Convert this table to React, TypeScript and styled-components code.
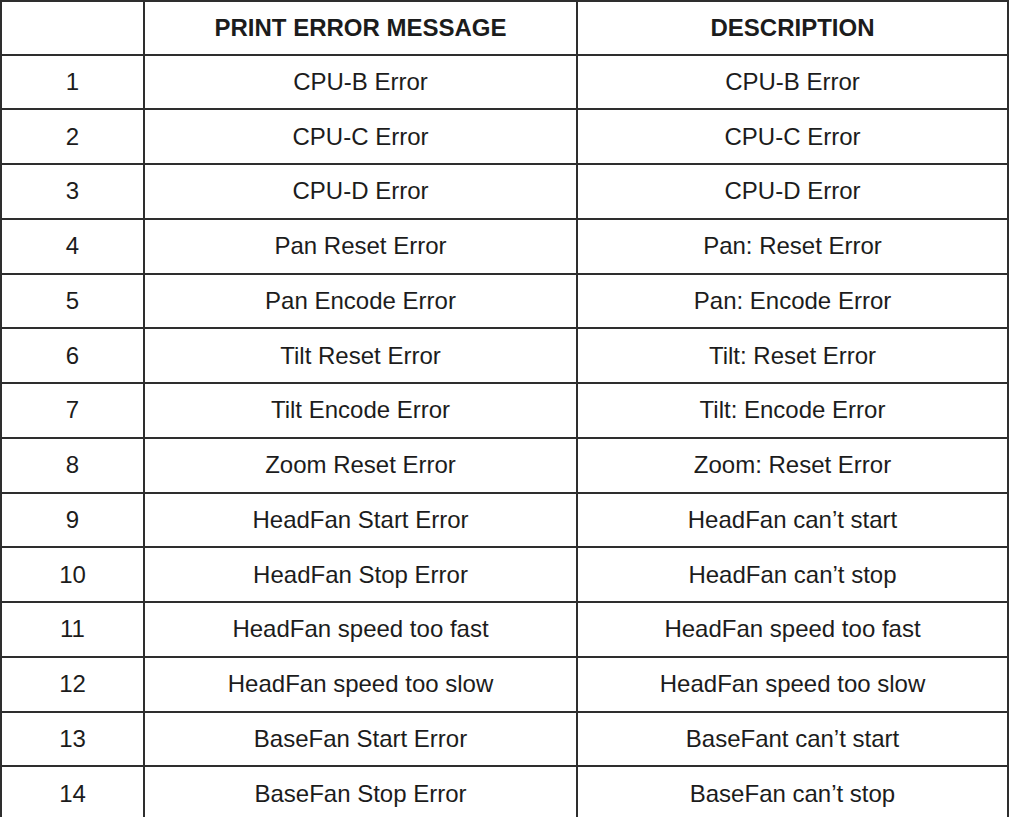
import styled, { createGlobalStyle } from "styled-components";

const GlobalStyle = createGlobalStyle`
  html, body {
    margin: 0;
    padding: 0;
    background: #ffffff;
  }
`;

const StyledTable = styled.table`
  width: 1007px;
  border-collapse: collapse;
  table-layout: fixed;
  font-family: "Liberation Sans", Arial, sans-serif;
  color: #1c1c1c;
`;

const StyledHeadCell = styled.th`
  height: 51.5px;
  padding: 0;
  border: 2px solid #2e2e2e;
  font-size: 24px;
  font-weight: 700;
  text-align: center;
  vertical-align: middle;
`;

const StyledCell = styled.td`
  height: 52.75px;
  padding: 0;
  border: 2px solid #2e2e2e;
  font-size: 24px;
  font-weight: 400;
  text-align: center;
  vertical-align: middle;
`;

interface ErrorRow {
  id: number
  message: string
  description: string
}

const rows: ErrorRow[] = [
  { id: 1, message: "CPU-B Error", description: "CPU-B Error" },
  { id: 2, message: "CPU-C Error", description: "CPU-C Error" },
  { id: 3, message: "CPU-D Error", description: "CPU-D Error" },
  { id: 4, message: "Pan Reset Error", description: "Pan: Reset Error" },
  { id: 5, message: "Pan Encode Error", description: "Pan: Encode Error" },
  { id: 6, message: "Tilt Reset Error", description: "Tilt: Reset Error" },
  { id: 7, message: "Tilt Encode Error", description: "Tilt: Encode Error" },
  { id: 8, message: "Zoom Reset Error", description: "Zoom: Reset Error" },
  { id: 9, message: "HeadFan Start Error", description: "HeadFan can\u2019t start" },
  { id: 10, message: "HeadFan Stop Error", description: "HeadFan can\u2019t stop" },
  { id: 11, message: "HeadFan speed too fast", description: "HeadFan speed too fast" },
  { id: 12, message: "HeadFan speed too slow", description: "HeadFan speed too slow" },
  { id: 13, message: "BaseFan Start Error", description: "BaseFant can\u2019t start" },
  { id: 14, message: "BaseFan Stop Error", description: "BaseFan can\u2019t stop" },
];

const App = () => {
  return (
    <>
      <GlobalStyle />
      <StyledTable>
        <colgroup>
          <col style={{ width: 143 }} />
          <col style={{ width: 433 }} />
          <col style={{ width: 431 }} />
        </colgroup>
        <thead>
          <tr>
            <StyledHeadCell></StyledHeadCell>
            <StyledHeadCell>PRINT ERROR MESSAGE</StyledHeadCell>
            <StyledHeadCell>DESCRIPTION</StyledHeadCell>
          </tr>
        </thead>
        <tbody>
          {rows.map((row) =>
            <tr key={row.id}>
              <StyledCell>{row.id}</StyledCell>
              <StyledCell>{row.message}</StyledCell>
              <StyledCell>{row.description}</StyledCell>
            </tr>
          )}
        </tbody>
      </StyledTable>
    </>
  )
}

export default App;
